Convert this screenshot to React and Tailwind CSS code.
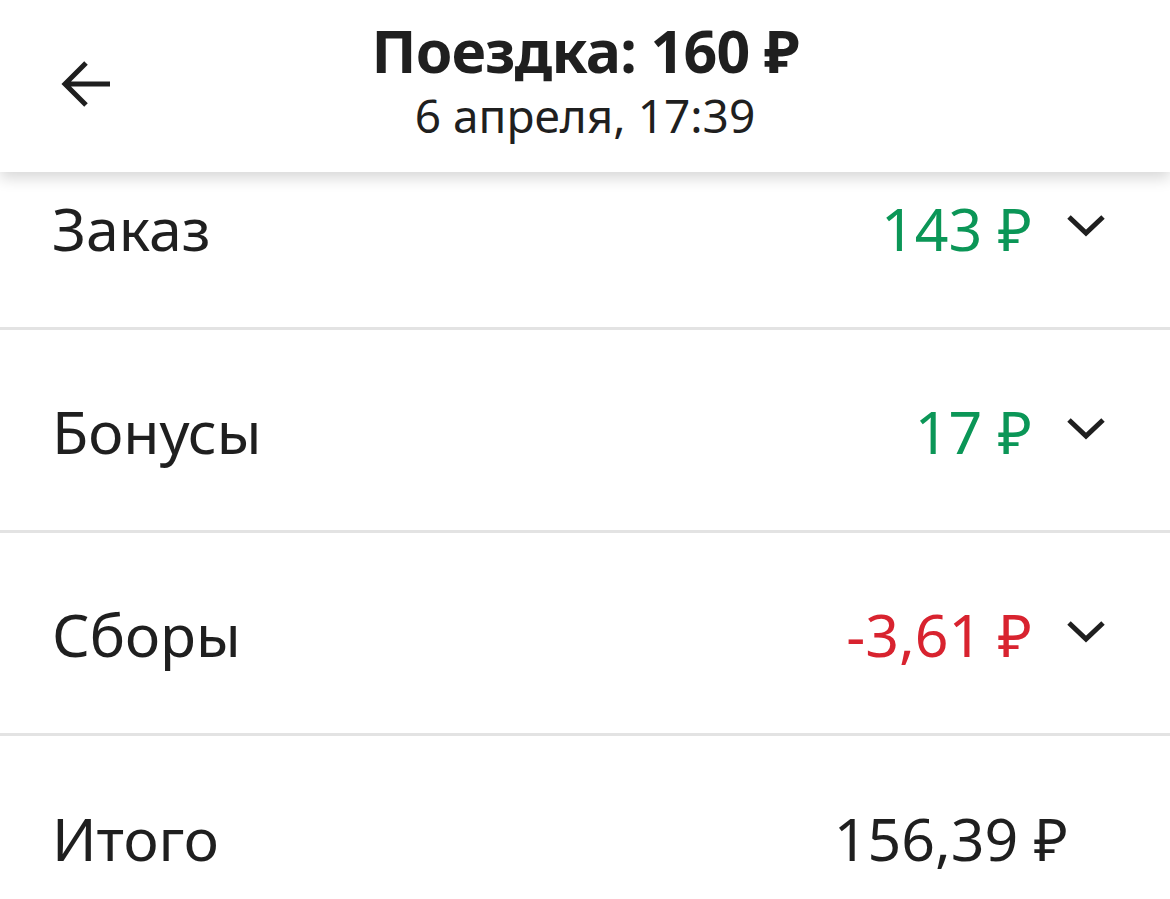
import React from 'react';

const Chevron = () => (
  <svg width="40" height="30" viewBox="0 0 40 30" className="shrink-0">
    <path d="M3 5 L20 21 L37 5" fill="none" stroke="#1f1f1f" strokeWidth="5" />
  </svg>
);

const rows = [
  { label: 'Заказ', value: '143 ₽', color: 'text-[#0b9657]', chevron: true },
  { label: 'Бонусы', value: '17 ₽', color: 'text-[#0b9657]', chevron: true },
  { label: 'Сборы', value: '-3,61 ₽', color: 'text-[#d8232f]', chevron: true },
  { label: 'Итого', value: '156,39 ₽', color: 'text-[#1f1f1f]', chevron: false },
];

export default function App() {
  return (
    <div
      className="w-[1170px] h-[899px] overflow-hidden bg-[#f4f4f4] text-[#1f1f1f]"
      style={{ fontFamily: '"Noto Sans", "Open Sans", sans-serif' }}
    >
      <header className="relative z-10 h-[172px] bg-white shadow-[0_6px_14px_rgba(0,0,0,0.16)]">
        <button className="absolute left-[57px] top-[56px] w-[56px] h-[56px] flex items-center justify-center">
          <svg width="56" height="56" viewBox="0 0 56 56">
            <path d="M53 28 H8 M29 7 L8 28 L29 49" fill="none" stroke="#1f1f1f" strokeWidth="5" />
          </svg>
        </button>
        <div className="w-full flex flex-col items-center pt-[14px]">
          <div className="text-[59px] font-bold leading-[72px] tracking-[-0.8px]">Поездка: 160 ₽</div>
          <div className="text-[46px] leading-[54px] mt-[2px]">6 апреля, 17:39</div>
        </div>
      </header>

      <div className="-mt-[45px] bg-white rounded-[40px] overflow-hidden">
        {rows.map((r, i) => (
          <div
            key={r.label}
            className={`h-[203px] flex items-center pl-[52px] pr-[66px] ${i < rows.length - 1 ? 'border-b-[3px] border-[#e3e3e3]' : ''}`}
          >
            <div className="flex-1 text-[59px] leading-none pt-[2px]">{r.label}</div>
            <div className={`text-[59px] leading-none pt-[2px] ${r.color} ${r.chevron ? '' : 'mr-[36px]'}`}>{r.value}</div>
            {r.chevron && (
              <div className="ml-[34px] mr-[-2px]">
                <Chevron />
              </div>
            )}
          </div>
        ))}
      </div>
    </div>
  );
}
